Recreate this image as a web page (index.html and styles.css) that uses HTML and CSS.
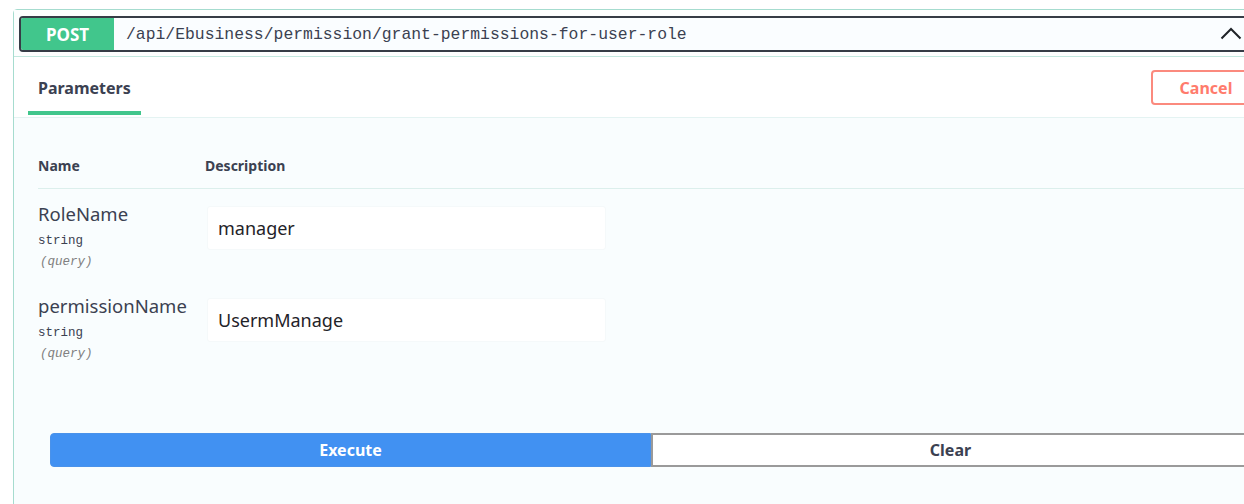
FILE: index.html
```html
<!DOCTYPE html>
<html lang="en">
<head>
<meta charset="utf-8">
<title>grant-permissions-for-user-role</title>
<link rel="stylesheet" href="styles.css">
</head>
<body>
<div class="opblock">
  <div class="summary">
    <div class="summary-bar">
      <span class="method">POST</span>
      <span class="path">/api/Ebusiness/permission/grant-permissions-for-user-role</span>
      <svg class="chevron" width="22" height="13" viewBox="0 0 22 13"><path d="M1.5 11.5 L11 2 L20.5 11.5" fill="none" stroke="#1f2328" stroke-width="2"/></svg>
    </div>
  </div>
  <div class="tab-header">
    <div class="tab">
      <span class="tab-label">Parameters</span>
      <span class="tab-underline"></span>
    </div>
    <button class="cancel">Cancel</button>
  </div>
  <div class="body">
    <div class="params">
      <div class="params-head">
        <div class="col-name">Name</div>
        <div class="col-desc">Description</div>
      </div>
      <div class="param-row">
        <div class="col-name">
          <div class="pname">RoleName</div>
          <div class="ptype">string</div>
          <div class="pin">(query)</div>
        </div>
        <div class="col-desc"><div class="input">manager</div></div>
      </div>
      <div class="param-row">
        <div class="col-name">
          <div class="pname">permissionName</div>
          <div class="ptype">string</div>
          <div class="pin">(query)</div>
        </div>
        <div class="col-desc"><div class="input">UsermManage</div></div>
      </div>
    </div>
    <div class="actions">
      <button class="execute">Execute</button>
      <button class="clear">Clear</button>
    </div>
  </div>
</div>
</body>
</html>
```

FILE: styles.css
```css
* { box-sizing: border-box; }
html, body {
  margin: 0;
  padding: 0;
  background: #ffffff;
  overflow: hidden;
}
body {
  font-family: "Noto Sans", "Open Sans", sans-serif;
  color: #3b4151;
  padding: 9px 0 0 13px;
  width: 1300px;
  height: 504px;
}
.opblock {
  width: 1262px;
  border: 1px solid #a6dccf;
  border-radius: 4px 4px 0 0;
  background: #f9fdfe;
  height: 520px;
}
.summary {
  background: #fdfefe;
  padding: 6px 5px 4px 5px;
  border-bottom: 1px solid #c3e8df;
}
.summary-bar {
  display: flex;
  align-items: center;
  height: 36px;
  border: 2px solid #363c46;
  border-radius: 4px;
  background: #fafdff;
  overflow: hidden;
}
.method {
  flex: none;
  width: 93px;
  height: 100%;
  background: #41c68c;
  color: #ffffff;
  font-weight: 700;
  font-size: 17px;
  display: flex;
  align-items: center;
  justify-content: center;
}
.path {
  flex: 1;
  padding-left: 12px;
  font-family: "Liberation Mono", "DejaVu Sans Mono", monospace;
  font-size: 16.4px;
  color: #3b4151;
  white-space: nowrap;
}
.chevron {
  flex: none;
  margin-right: 25px;
  margin-top: -2px;
}
.tab-header {
  display: flex;
  align-items: flex-start;
  background: #ffffff;
  padding: 0 13px 0 14px;
  border-bottom: 1px solid #e4f3f2;
}
.tab {
  display: flex;
  flex-direction: column;
  padding-top: 20px;
}
.tab-label {
  padding: 0 10px;
  font-size: 16px;
  line-height: 22px;
  font-weight: 700;
  color: #3b4151;
  margin-bottom: 12px;
}
.tab-underline {
  height: 4px;
  background: #41c68c;
  margin-bottom: 2px;
}
.cancel {
  margin-left: auto;
  margin-top: 13px;
  width: 110px;
  height: 35px;
  border: 2px solid #fb8a7e;
  border-radius: 4px;
  background: #ffffff;
  color: #ff7b6c;
  font-family: inherit;
  font-size: 16px;
  font-weight: 700;
  padding: 0;
}
.params {
  margin-left: 24px;
}
.params-head {
  display: flex;
  padding: 38px 0 12px;
  border-bottom: 1px solid #dcefec;
  font-size: 14px;
  line-height: 20px;
  font-weight: 700;
}
.col-name {
  width: 167px;
  flex: none;
}
.col-desc {
  flex: 1;
}
.param-row {
  display: flex;
  padding: 13px 0 9px;
}
.pname {
  font-size: 18.5px;
  line-height: 24px;
  color: #3b4151;
}
.ptype {
  margin-top: 5px;
  font-family: "Liberation Mono", "DejaVu Sans Mono", monospace;
  font-size: 12.5px;
  line-height: 20px;
  color: #3b4151;
}
.pin {
  margin-top: 1px;
  padding-left: 2px;
  font-family: "Liberation Mono", "DejaVu Sans Mono", monospace;
  font-style: italic;
  font-size: 12.5px;
  line-height: 20px;
  color: #808080;
}
.param-row .col-desc {
  padding-top: 4px;
}
.input {
  margin-left: 2px;
  width: 399px;
  height: 44px;
  background: #ffffff;
  border: 1px solid #f5f9fa;
  border-radius: 3px;
  padding-left: 10px;
  display: flex;
  align-items: center;
  font-size: 18px;
  color: #1f2328;
}
.actions {
  display: grid;
  grid-template-columns: 601px 1fr;
  padding: 60px 24px 0 36px;
}
.execute, .clear {
  height: 34px;
  font-family: inherit;
  font-size: 16px;
  font-weight: 700;
  padding: 0;
}
.execute {
  background: #4191f2;
  color: #ffffff;
  border: 1px solid #4a92ea;
  border-radius: 4px 0 0 4px;
}
.clear {
  background: #ffffff;
  color: #3b4151;
  border: 2px solid #9a9a9a;
  border-radius: 0 4px 4px 0;
}
```
